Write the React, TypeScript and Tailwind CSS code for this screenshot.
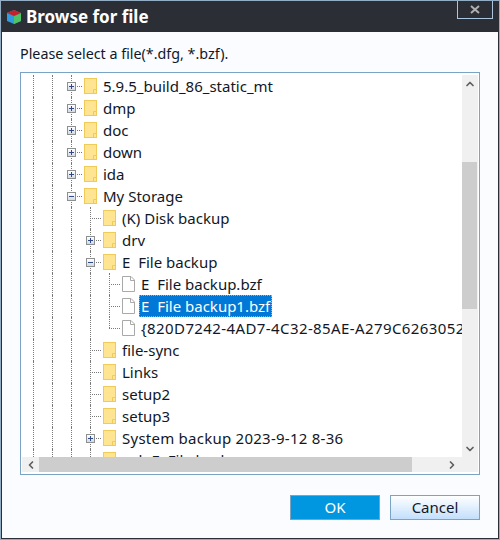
import { ChevronLeft, ChevronRight, ChevronUp, ChevronDown } from 'lucide-react';

type Row = {
  depth: number;
  label: string;
  expander?: '+' | '-';
  file?: boolean;
  last?: boolean;
  selected?: boolean;
  wide?: 'tracking-[0.25px]' | 'tracking-[0.4px]';
};

const rows: Row[] = [
  { depth: 2, label: '5.9.5_build_86_static_mt', expander: '+' },
  { depth: 2, label: 'dmp', expander: '+' },
  { depth: 2, label: 'doc', expander: '+' },
  { depth: 2, label: 'down', expander: '+' },
  { depth: 2, label: 'ida', expander: '+' },
  { depth: 2, label: 'My Storage', expander: '-' },
  { depth: 3, label: '(K) Disk backup' },
  { depth: 3, label: 'drv', expander: '+' },
  { depth: 3, label: 'E  File backup', expander: '-' },
  { depth: 4, label: 'E  File backup.bzf', file: true },
  { depth: 4, label: 'E  File backup1.bzf', file: true, selected: true },
  { depth: 4, label: '{820D7242-4AD7-4C32-85AE-A279C6263052}', file: true, last: true, wide: 'tracking-[0.4px]' },
  { depth: 3, label: 'file-sync' },
  { depth: 3, label: 'Links' },
  { depth: 3, label: 'setup2' },
  { depth: 3, label: 'setup3' },
  { depth: 3, label: 'System backup 2023-9-12 8-36', expander: '+', wide: 'tracking-[0.25px]' },
  { depth: 3, label: 'sub E  File backup' },
];

function FolderIcon() {
  return (
    <svg width="13" height="16" viewBox="0 0 13 16" className="shrink-0">
      <rect x="0.5" y="0.5" width="12" height="15" fill="#ffe592" stroke="#f1cb5a" />
      <path d="M9.5 15.5v-4h3" fill="none" stroke="#f1cb5a" />
    </svg>
  );
}

function FileIcon() {
  return (
    <svg width="13" height="16" viewBox="0 0 13 16" className="shrink-0">
      <path d="M0.5 0.5h8.5l3.5 3.5v11.5h-12z" fill="#fff" stroke="#a9a9a9" />
      <path d="M8.5 0.5v4h4" fill="none" stroke="#a9a9a9" />
    </svg>
  );
}

function Expander({ kind }: { kind: '+' | '-' }) {
  return (
    <span className="absolute left-[-4px] top-[7px] flex h-[9px] w-[9px] items-center justify-center border border-[#8e8f8f] bg-gradient-to-b from-white to-[#d5d9e3]">
      <svg width="7" height="7" viewBox="0 0 7 7">
        <path d="M1 3.5h5" stroke="#2f4a8a" />
        {kind === '+' && <path d="M3.5 1v5" stroke="#2f4a8a" />}
      </svg>
    </span>
  );
}

function TreeRow({ row }: { row: Row }) {
  const guides = Array.from({ length: row.depth });
  return (
    <div className="flex h-[22px] items-center whitespace-pre">
      {guides.map((_, i) => (
        <span key={i} className="h-full w-[19px] shrink-0 border-l border-dotted border-[#7a7a7a]" />
      ))}
      <span className="relative h-full w-[13px] shrink-0">
        <span className={`absolute left-0 top-0 border-l border-dotted border-[#7a7a7a] ${row.last ? 'h-[11px]' : 'h-full'}`} />
        <span className="absolute left-0 top-[11px] w-[11px] border-t border-dotted border-[#7a7a7a]" />
        {row.expander && <Expander kind={row.expander} />}
      </span>
      {row.file ? <FileIcon /> : <FolderIcon />}
      <span
        className={`ml-[4px] flex h-[22px] items-center border px-px ${row.wide ?? ''} ${
          row.selected ? 'border-dotted border-[#e8a33c] bg-[#0078d7] text-white' : 'border-transparent text-[#101828]'
        }`}
      >
        {row.label}
      </span>
    </div>
  );
}

export default function App() {
  return (
    <div className="h-[540px] w-[500px] border border-[#93adc4] font-['Noto_Sans',sans-serif] text-[#101828]">
      <div className="flex h-full flex-col border-x border-b border-[#2b2e35] bg-[#fafcff]">
        <div className="flex h-[31px] shrink-0 items-start justify-between bg-[#2b2e35] pl-[4px] pr-[5px]">
          <div className="flex h-full items-center gap-[4px]">
            <svg width="16" height="16" viewBox="0 0 16 16">
              <path d="M8 1l7 3v8l-7 3-7-3V4z" fill="#2f9be0" />
              <path d="M8 7l7-3v8l-7 3z" fill="#4fc267" />
              <path d="M8 1l7 3-7 3-7-3z" fill="#c8202a" />
            </svg>
            <span className="text-[17px] font-bold text-white">Browse for file</span>
          </div>
          <div className="flex h-[18px] w-[36px] items-center justify-center border-x border-b border-[#a9c6de]">
            <svg width="10" height="9" viewBox="0 0 10 9">
              <path d="M1 1l8 7M9 1l-8 7" stroke="#b0b0b0" strokeWidth="2" />
            </svg>
          </div>
        </div>

        <div className="flex min-h-0 flex-1 flex-col px-[18px]">
          <div className="flex h-[40px] shrink-0 items-center pt-[4px] text-[14.3px]">Please select a file(*.dfg, *.bzf).</div>

          <div className="flex h-[403px] shrink-0 flex-col border border-[#7ba3c4] bg-white pb-[2px] pl-px pr-px pt-px">
            <div className="flex min-h-0 flex-1">
              <div className="min-w-0 flex-1 overflow-hidden pl-[11px] text-[15px]">
                <div className="pt-px">
                  {rows.map((row) => (
                    <TreeRow key={row.label} row={row} />
                  ))}
                </div>
              </div>
              <div className="mt-px flex w-[16px] shrink-0 flex-col bg-[#f0f0f0]">
                <div className="flex h-[17px] items-center justify-center">
                  <ChevronUp size={12} strokeWidth={3.5} color="#606060" />
                </div>
                <div className="mt-[70px] h-[147px] w-[15px] bg-[#cdcdcd]" />
                <div className="flex-1" />
                <div className="flex h-[17px] items-center justify-center">
                  <ChevronDown size={12} strokeWidth={3.5} color="#606060" />
                </div>
              </div>
            </div>
            <div className="flex h-[15px] shrink-0 bg-[#f0f0f0]">
              <div className="flex w-[17px] items-center justify-center">
                <ChevronLeft size={12} strokeWidth={3.5} color="#606060" />
              </div>
              <div className="w-[373px] bg-[#cdcdcd]" />
              <div className="flex w-[50px] items-center justify-end pr-[4px]">
                <ChevronRight size={12} strokeWidth={3.5} color="#606060" />
              </div>
            </div>
          </div>

          <div className="mt-[20px] flex justify-end gap-[10px]">
            <button className="flex h-[25px] w-[90px] items-center justify-center border border-[#7ba3c4] bg-[#0096e0] text-[15px] text-white">
              OK
            </button>
            <button className="flex h-[25px] w-[90px] items-center justify-center border border-[#7ba3c4] bg-gradient-to-b from-white to-[#c3dffb] text-[15px]">
              Cancel
            </button>
          </div>
        </div>
      </div>
    </div>
  );
}
